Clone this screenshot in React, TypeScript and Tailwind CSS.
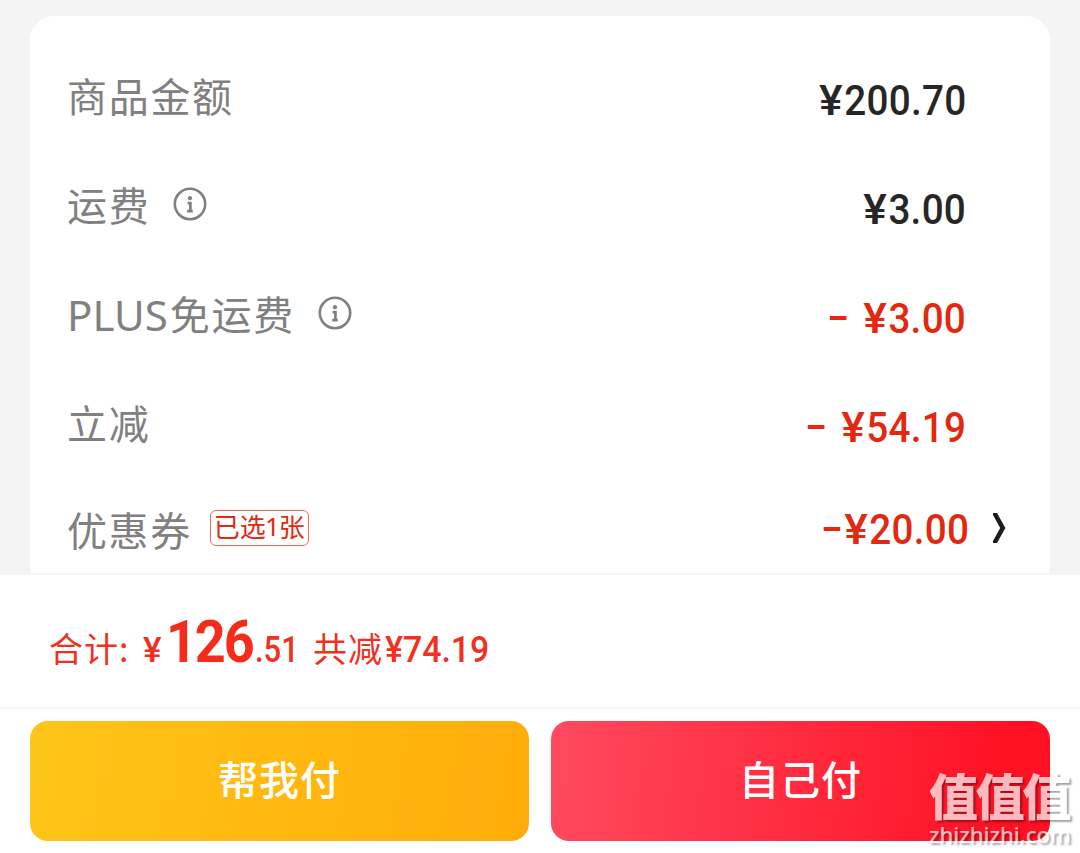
import type { ReactNode } from "react";
import clsx from "clsx";

const InfoIcon = ({ className }: { className?: string }) => (
  <svg viewBox="0 0 34 34" fill="none" stroke="#808080" className={clsx("size-[34px] shrink-0", className)}>
    <circle cx="17" cy="17" r="15.2" strokeWidth="2.6" />
    <circle cx="17" cy="11.2" r="2.1" fill="#808080" stroke="none" />
    <path d="M14.6 16.2h2.8v7.4M14.2 24.2h5.6" strokeWidth="2.7" />
  </svg>
);

interface PriceProps {
  children: ReactNode;
  discount?: boolean;
  className?: string;
}

const Price = ({ children, discount, className }: PriceProps) => (
  <span
    className={clsx(
      "flex origin-right scale-x-92 items-center font-[Roboto,sans-serif] text-[42px] leading-[50px] font-medium tracking-[0.3px]",
      discount ? "text-[#e2280f]" : "text-[#262626]",
      className
    )}
  >
    {discount && <i className="mb-[2px] h-[4px] w-[18px] bg-current" />}
    <span>
      <span className="mr-[3px] inline-block scale-x-115">¥</span>
      {children}
    </span>
  </span>
);

const Row = ({ label, children }: { label: ReactNode; children: ReactNode }) => (
  <div className="flex h-[109px] items-center justify-between pl-[37px] pr-[84px]">
    <div className="mb-[5px] flex items-center text-[40px] leading-[58px] tracking-[1.7px] text-[#808080]">{label}</div>
    {children}
  </div>
);

export default function App() {
  return (
    <div className="relative flex h-[853px] w-[1080px] flex-col overflow-hidden bg-[#f4f4f4] font-['Noto_Sans_CJK_SC',sans-serif] whitespace-nowrap">
      <div className="mx-[30px] mt-4 h-[557px] shrink-0 overflow-hidden rounded-t-[24px] bg-white pt-[27px]">
        <Row label="商品金额">
          <Price className="mt-[6px]">200.70</Price>
        </Row>
        <Row
          label={
            <>
              运费
              <InfoIcon className="ml-[23px]" />
            </>
          }
        >
          <Price className="mt-[6px]">3.00</Price>
        </Row>
        <Row
          label={
            <>
              <span className="mt-[4px] mr-[2px] font-['Noto_Sans',sans-serif] text-[42px] tracking-normal">PLUS</span>
              免运费
              <InfoIcon className="ml-[23px]" />
            </>
          }
        >
          <Price discount className="mt-[6px] gap-[20px]">
            3.00
          </Price>
        </Row>
        <Row label="立减">
          <Price discount className="mt-[6px] gap-[20px]">
            54.19
          </Price>
        </Row>
        <div className="flex h-[102px] items-center justify-between pl-[37px] pr-[44px]">
          <div className="flex items-center">
            <span className="mb-[2px] text-[40px] leading-[58px] tracking-[1.6px] text-[#808080]">优惠券</span>
            <span className="mb-[5px] ml-[18px] flex h-[36px] w-[99px] items-center justify-center rounded-[6px] border border-[#ee6a5c] pb-[3px] text-[26px] leading-[34px] text-[#e2280f]">
              已选<span className="-mx-px font-['Noto_Sans',sans-serif]">1</span>张
            </span>
          </div>
          <div className="flex items-center">
            <Price discount className="gap-[6px]">
              20.00
            </Price>
            <svg viewBox="0 0 14 30" fill="none" className="mb-[4px] ml-[23px] h-[30px] w-[14px]">
              <path d="M1 0h4l8.4 15L5 30H1V28L8.2 15 1 2z" fill="#1c1c1c" />
            </svg>
          </div>
        </div>
      </div>

      <div className="flex h-[136px] shrink-0 items-baseline border-y-2 border-[#f5f5f5] bg-white pl-[49px] pt-[27px] text-[#f1301f]">
        <span className="w-[94px] text-[34px] tracking-[1px]">合计:</span>
        <span className="w-[23px] font-[Roboto,sans-serif] text-[35px] font-medium">¥</span>
        <span className="w-[89px] origin-left scale-x-90 font-[Roboto,sans-serif] text-[60px] leading-[80px] font-bold tracking-[-2.4px] text-[#f42c1c]">
          126
        </span>
        <span className="w-[58px] origin-left scale-x-86 font-[Roboto,sans-serif] text-[36px] font-medium">.51</span>
        <span className="w-[72px] text-[34px] tracking-[1px]">共减</span>
        <span className="origin-left scale-x-94 font-[Roboto,sans-serif] text-[36px] font-medium">¥74.19</span>
      </div>

      <div className="flex grow gap-[22px] bg-white px-[30px] pt-[12px] text-[40px] font-medium tracking-[1px] text-white">
        <button className="h-[120px] flex-1 rounded-[18px] bg-linear-[100deg,#ffc519,#ffac09] pb-[6px]">帮我付</button>
        <button className="h-[120px] flex-1 rounded-[18px] bg-linear-[95deg,#ff4a5f,#ff1022_92%] pb-[6px]">自己付</button>
      </div>

      {/* site mark over the corner of the pay button */}
      <div className="absolute top-[766px] left-[929px] flex w-[144px] flex-col text-white opacity-70 [text-shadow:2px_2px_2px_rgba(0,0,0,0.5)]">
        <span className="text-[49px] leading-[56px] font-black tracking-[-2.2px]">值值值</span>
        <span className="mt-px font-['Noto_Sans',sans-serif] text-[22px] leading-[22px] font-medium">zhizhizhi.com</span>
      </div>
    </div>
  );
}
